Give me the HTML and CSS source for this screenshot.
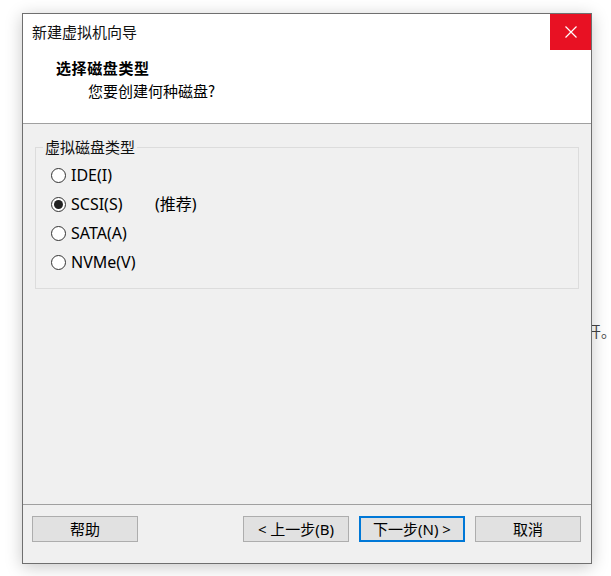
FILE: index.html
```html
<!DOCTYPE html>
<html lang="zh-CN">
<head>
<meta charset="utf-8">
<title>新建虚拟机向导</title>
<link rel="stylesheet" href="styles.css">
</head>
<body>
<span class="behind-text">开。</span>
<div class="window">
  <div class="titlebar">
    <span class="title">新建虚拟机向导</span>
    <div class="close">
      <svg width="12" height="12" viewBox="0 0 12 12"><path d="M0.5 0.5 L11.5 11.5 M11.5 0.5 L0.5 11.5" stroke="#fff" stroke-width="1.2" fill="none"/></svg>
    </div>
  </div>
  <div class="header">
    <div class="h-title">选择磁盘类型</div>
    <div class="h-sub">您要创建何种磁盘?</div>
  </div>
  <div class="content">
    <div class="group">
      <div class="group-label">虚拟磁盘类型</div>
      <div class="options">
        <div class="opt"><span class="radio"></span><span class="opt-text">IDE(I)</span></div>
        <div class="opt"><span class="radio checked"></span><span class="opt-text wide">SCSI(S)</span><span class="hint">(推荐)</span></div>
        <div class="opt"><span class="radio"></span><span class="opt-text">SATA(A)</span></div>
        <div class="opt"><span class="radio"></span><span class="opt-text">NVMe(V)</span></div>
      </div>
    </div>
  </div>
  <div class="footer">
    <button class="btn">帮助</button>
    <div class="spacer"></div>
    <button class="btn">&lt; 上一步(B)</button>
    <button class="btn default">下一步(N) &gt;</button>
    <button class="btn">取消</button>
  </div>
</div>
</body>
</html>
```

FILE: styles.css
```css
html, body {
  margin: 0;
  padding: 0;
}
body {
  width: 611px;
  height: 576px;
  background: #ffffff;
  overflow: hidden;
  position: relative;
  font-family: "Noto Sans", "Noto Sans CJK SC", sans-serif;
  font-size: 15px;
  color: #000;
  padding-top: 13px;
  box-sizing: border-box;
}
.behind-text {
  position: absolute;
  left: 586px;
  top: 321px;
  font-family: "Noto Sans CJK SC", sans-serif;
  font-size: 15px;
  line-height: 20px;
  color: #444;
  white-space: nowrap;
  z-index: 0;
}
.window {
  position: relative;
  z-index: 1;
  margin-left: 22px;
  width: 570px;
  height: 551px;
  box-sizing: border-box;
  border: 1px solid #6f6f6f;
  background: #f0f0f0;
  box-shadow: 0 3px 16px rgba(0, 0, 0, 0.22);
  display: flex;
  flex-direction: column;
}
.titlebar {
  height: 36px;
  background: #fff;
  display: flex;
  align-items: center;
  padding-left: 9px;
}
.title {
  flex: 1;
  font-family: "Noto Sans CJK SC", sans-serif;
  font-size: 15px;
  line-height: 20px;
  color: #111;
}
.close {
  width: 41px;
  height: 36px;
  background: #e81123;
  display: flex;
  align-items: center;
  justify-content: center;
}
.header {
  height: 73px;
  background: #fff;
  border-bottom: 1px solid #a0a0a0;
  padding-left: 33px;
  box-sizing: content-box;
}
.h-title {
  font-family: "Noto Sans CJK SC", sans-serif;
  font-weight: 700;
  font-size: 15px;
  letter-spacing: 0.6px;
  line-height: 20px;
  margin-top: 8px;
}
.h-sub {
  font-family: "Noto Sans CJK SC", sans-serif;
  font-size: 15px;
  line-height: 20px;
  margin-top: 3px;
  padding-left: 32px;
}
.content {
  flex: 1;
  padding-top: 23px;
}
.group {
  margin: 0 12px;
  border: 1px solid #dcdcdc;
}
.group-label {
  width: fit-content;
  margin: -11px 0 0 7px;
  padding: 0 2px;
  background: #f0f0f0;
  font-family: "Noto Sans CJK SC", sans-serif;
  font-size: 15px;
  line-height: 20px;
  color: #111;
}
.options {
  padding: 4px 0 11px 15px;
}
.opt {
  height: 29px;
  display: flex;
  align-items: center;
  font-size: 16px;
}
.radio {
  width: 15px;
  height: 15px;
  box-sizing: border-box;
  border: 1px solid #333;
  border-radius: 50%;
  background: #fff;
  margin-right: 5px;
  display: flex;
  align-items: center;
  justify-content: center;
}
.radio.checked::after {
  content: "";
  width: 9px;
  height: 9px;
  border-radius: 50%;
  background: #222;
}
.opt-text {
  line-height: 20px;
  margin-top: -2px;
}
.opt-text.wide {
  width: 84px;
}
.hint {
  font-family: "Noto Sans", "Noto Sans CJK SC", sans-serif;
  line-height: 20px;
  margin-top: -2px;
}
.footer {
  height: 47px;
  border-top: 1px solid #a0a0a0;
  display: flex;
  align-items: flex-start;
  padding: 11px 10px 0 9px;
  box-sizing: content-box;
}
.spacer {
  flex: 1;
}
.btn {
  width: 106px;
  height: 26px;
  box-sizing: border-box;
  border: 1px solid #adadad;
  background: #e1e1e1;
  font-family: "Noto Sans", "Noto Sans CJK SC", sans-serif;
  font-size: 15px;
  line-height: 20px;
  color: #000;
  padding: 0;
  margin: 0 0 0 10px;
}
.btn:first-child {
  margin-left: 0;
}
.btn.default {
  border: 2px solid #0078d7;
}
```
